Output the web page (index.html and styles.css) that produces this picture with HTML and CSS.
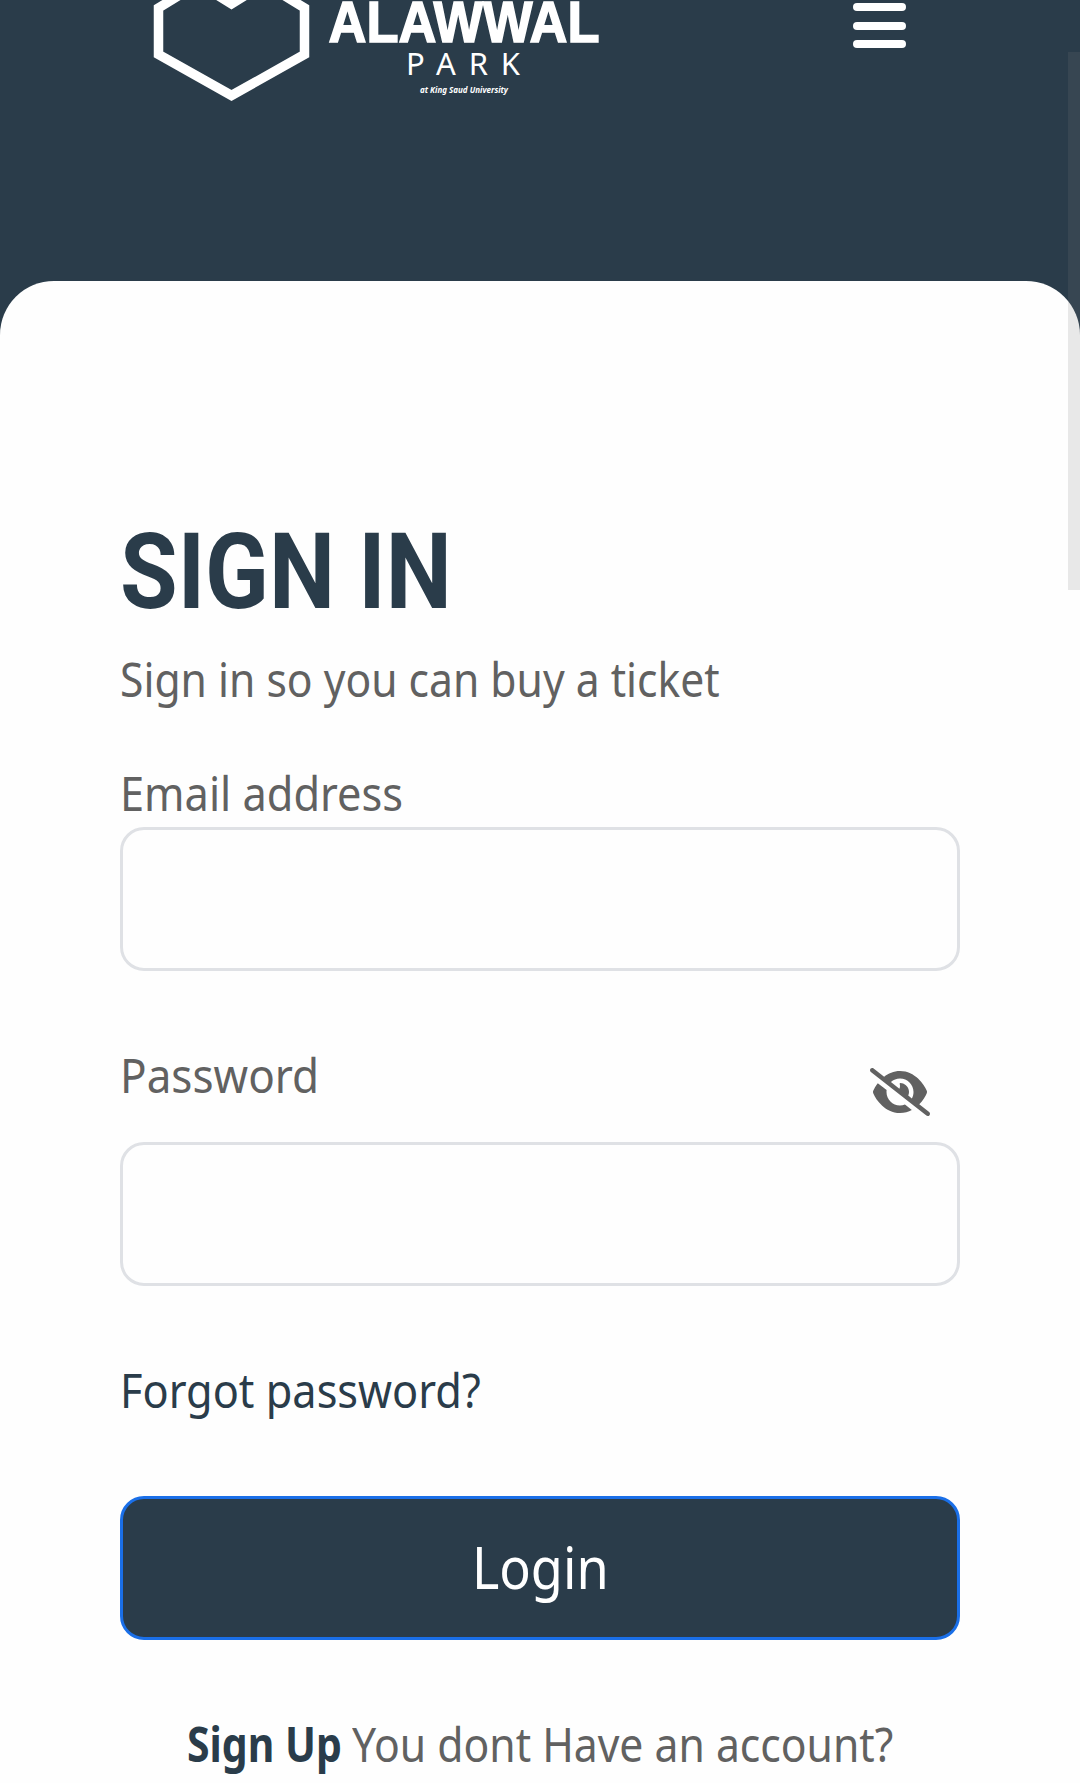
FILE: index.html
```html
<!DOCTYPE html>
<html lang="en">
<head>
<meta charset="utf-8">
<title>Sign in</title>
<link rel="stylesheet" href="styles.css">
</head>
<body>
<header class="header">
  <svg class="logo" viewBox="0 0 460 104" role="img" aria-label="Alawwal Park">
    <path class="logo-mark" d="M51-12 18.500 8V54.500L91.500 95.500 164.500 54.500V8L132-12M66-12 91.500 4 117-12"/>
    <text class="logo-name" x="188.500" y="41.500" textLength="271" lengthAdjust="spacingAndGlyphs">ALAWWAL</text>
    <text class="logo-park" x="266" y="75" textLength="114">PARK</text>
    <text class="logo-note" x="280" y="93" textLength="88" lengthAdjust="spacingAndGlyphs">at King Saud University</text>
  </svg>
  <button class="menu" aria-label="Menu"><span></span><span></span><span></span></button>
</header>
<main class="sheet">
  <h1 class="title"><span class="t-title">SIGN IN</span></h1>
  <p class="line intro"><span class="t-intro">Sign in so you can buy a ticket</span></p>
  <form class="form">
    <label class="line email-label" for="email"><span class="t-email">Email address</span></label>
    <input class="field" id="email" type="email">
    <div class="password-row">
      <label class="line" for="password"><span class="t-password">Password</span></label>
      <svg class="eye" viewBox="0 0 640 512"><path d="M38.800 5.100C28.400-3.100 13.300-1.200 5.100 9.200S-1.200 34.700 9.200 42.900l592 464c10.400 8.200 25.500 6.300 33.700-4.100s6.300-25.500-4.100-33.700L525.600 386.700c39.600-40.600 66.400-86.100 79.900-118.400c3.300-7.900 3.300-16.700 0-24.600c-14.900-35.700-46.200-87.700-93-131.100C465.500 68.800 400.800 32 320 32c-68.200 0-125 26.300-169.300 60.800L38.800 5.100zM223.100 149.500C248.600 126.200 282.700 112 320 112c79.500 0 144 64.500 144 144c0 24.900-6.300 48.300-17.400 68.700L408 294.500c8.400-19.300 10.600-41.400 4.800-63.300c-11.100-41.500-47.800-69.400-88.600-71.100c-5.800-.2-9.200 6.100-7.400 11.700c2.100 6.400 3.300 13.200 3.300 20.300c0 10.200-2.400 19.800-6.600 28.300l-90.300-70.800zM373 389.900c-16.400 6.500-34.300 10.100-53 10.100c-79.500 0-144-64.500-144-144c0-6.900 .5-13.600 1.400-20.200L83.100 161.500C60.300 191.200 44 220.800 34.500 243.700c-3.300 7.900-3.300 16.700 0 24.600c14.900 35.700 46.200 87.700 93 131.100C174.500 443.200 239.200 480 320 480c47.800 0 89.900-12.900 126.200-32.500L373 389.900z"/></svg>
    </div>
    <input class="field" id="password" type="password">
    <a class="line forgot"><span class="t-forgot">Forgot password?</span></a>
    <button class="login" type="button"><span class="t-login">Login</span></button>
  </form>
  <p class="line signup"><a class="signup-link"><span class="t-signup">Sign Up</span></a><span class="t-account">You dont Have an account?</span></p>
</main>
<div class="scroll-thumb"></div>
</body>
</html>
```
FILE: styles.css
```css
* { box-sizing: border-box; }

body {
  margin: 0;
  height: 1783px;
  overflow: hidden;
  background: #2a3c4a;
  color: #616161;
  font: 47.500px/72px "Noto Sans", sans-serif;
}

.header {
  display: flex;
  justify-content: space-between;
  align-items: flex-start;
  height: 281px;
  padding: 0 174px 0 140px;
}

.logo { width: 460px; height: 104px; fill: #fff; }
.logo-mark { fill: none; stroke: #fff; stroke-width: 9.500; }
.logo-name {
  font: bold 56.500px "Liberation Sans", sans-serif;
  stroke: #fff;
  stroke-width: 1.500px;
}
.logo-park { font: 31px "Noto Sans", sans-serif; }
.logo-note { font: italic bold 9px "Noto Sans", sans-serif; }

.menu {
  display: flex;
  flex-direction: column;
  gap: 10.500px;
  padding: 3px 0 0;
  border: 0;
  background: none;
}
.menu span { width: 53px; height: 8px; border-radius: 4px; background: #fff; }

.sheet {
  height: 1502px;
  padding: 237px 120px 0;
  border-radius: 54px 54px 0 0;
  background: #fefefe;
}

.title {
  margin: 0;
  height: 125px;
  color: #2a3c4a;
  font-family: Roboto, sans-serif;
  font-size: 105px;
  line-height: 110px;
}
.line { display: block; margin: 0; height: 72px; white-space: nowrap; }
.line span, .title span, .login span { display: inline-block; transform-origin: 0 50%; }

/* Narrow the letterforms to a condensed width */
.t-title { transform: scaleX(0.892); }
.t-intro { transform: scaleX(0.897); }
.t-email { transform: scaleX(0.912); }
.t-password { transform: scaleX(0.927); }
.t-forgot { transform: scaleX(0.911); }
.login .t-login { transform: scaleX(0.885); transform-origin: 50% 50%; }
.t-signup { transform: scaleX(0.862); }
.t-account { transform: scaleX(0.898); }

.intro { margin-bottom: 42px; }

.form { display: flex; flex-direction: column; }
.email-label { height: 70px; }
.field {
  width: 840px;
  height: 144px;
  border: 3px solid #dfe1e5;
  border-radius: 24px;
  background: #fefefe;
}
.password-row {
  display: flex;
  justify-content: space-between;
  height: 171px;
  padding: 68px 30px 0 0;
}
.eye { width: 60px; height: 48px; margin-top: 29px; fill: #616161; }
.forgot { margin: 68px 0 70px; color: #2a3c4a; }
.login {
  height: 144px;
  padding: 0 0 4px;
  border: 3px solid #1a6fe8;
  border-radius: 24px;
  background: #2a3c4a;
  color: #fff;
  font: 59px/80px "Noto Sans", sans-serif;
}
.signup { display: flex; padding-left: 67px; margin-top: 68px; }
.signup-link { width: 165px; color: #2a3c4a; font-weight: 700; }

.scroll-thumb {
  position: absolute;
  top: 52px;
  right: 0;
  width: 12px;
  height: 538px;
  background: rgba(126, 126, 126, 0.17);
}
```
